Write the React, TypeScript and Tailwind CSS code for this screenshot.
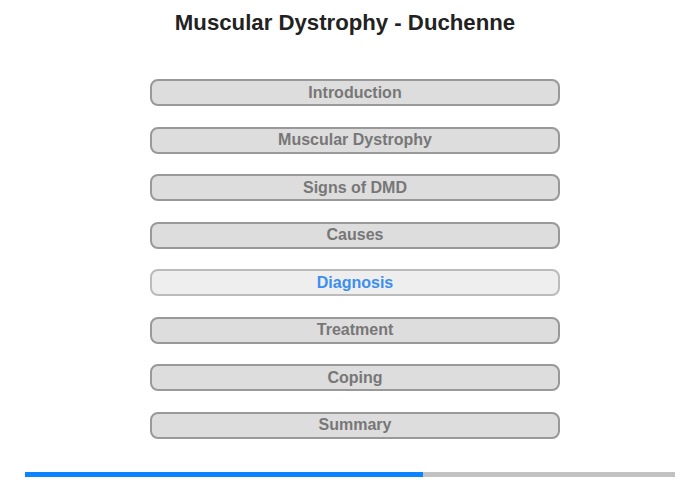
const sections = [
  "Introduction",
  "Muscular Dystrophy",
  "Signs of DMD",
  "Causes",
  "Diagnosis",
  "Treatment",
  "Coping",
  "Summary",
];

const active = "Diagnosis";

export default function App() {
  return (
    <div className="relative h-[480px] w-[700px] bg-white font-['Liberation_Sans',Arial,sans-serif]">
      <div className="flex h-[46px] w-[690px] items-center justify-center">
        <h1 className="text-[22.2px] font-bold text-[#222]">Muscular Dystrophy - Duchenne</h1>
      </div>

      <div className="ml-[150px] mt-[33px] flex w-[410px] flex-col gap-[20.5px]">
        {sections.map((s) =>
          s === active ? (
            <div
              key={s}
              className="flex h-[27px] items-center justify-center rounded-[8px] border-2 border-[#bbbbbb] bg-[#eeeeee] text-[16px] font-bold text-[#3b8ef0]"
            >
              {s}
            </div>
          ) : (
            <div
              key={s}
              className="flex h-[27px] items-center justify-center rounded-[8px] border-2 border-[#999999] bg-[#dddddd] text-[16px] font-bold text-[#777777]"
            >
              {s}
            </div>
          )
        )}
      </div>

      <div className="ml-[25px] mt-[33px] flex h-[5px] w-[650px]">
        <div className="w-[398px] bg-[#0a84ff]" />
        <div className="flex-1 bg-[#c2c2c2]" />
      </div>
    </div>
  );
}
